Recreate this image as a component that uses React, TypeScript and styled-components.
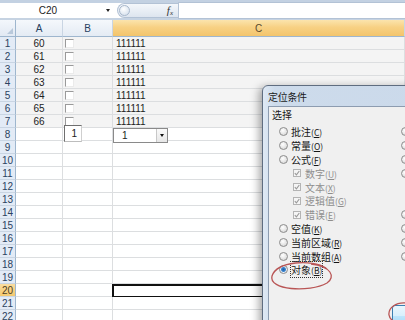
import React from 'react';
import styled, { createGlobalStyle, css } from 'styled-components';

const GlobalStyle = createGlobalStyle`
  html, body { margin: 0; padding: 0; background: #fff; overflow: hidden; }
  #root { width: 405px; height: 320px; }
`;

const Screen = styled.div`
  position: relative;
  width: 405px;
  height: 320px;
  overflow: hidden;
  font-family: "Liberation Sans", Arial, sans-serif;
  font-size: 10px;
  color: #222;
  background: #fff;
`;

/* ---------- formula bar ---------- */
const FormulaBar = styled.div`
  display: flex;
  align-items: center;
  height: 20px;
  box-sizing: border-box;
  border-top: 3px solid #c3d1e2;
  border-bottom: 2px solid #c6d3e2;
  background: #fff;
`;

const NameBox = styled.div`
  display: flex;
  align-items: center;
  width: 117px;
  height: 100%;
`;

const NameText = styled.div`
  width: 96px;
  text-align: center;
  color: #222;
`;

const Caret = styled.span`
  margin-left: 10px;
  width: 0;
  height: 0;
  border-left: 2.5px solid transparent;
  border-right: 2.5px solid transparent;
  border-top: 3px solid #222;
`;

const FxBubble = styled.div`
  display: flex;
  align-items: center;
  justify-content: space-between;
  box-sizing: border-box;
  width: 61px;
  height: 15px;
  padding-right: 5px;
  border: 1px solid #b3c2d5;
  border-right: none;
  border-radius: 8px 0 0 8px;
  background: linear-gradient(#f4f7fb, #dde5ef);
`;

const SplitKnob = styled.span`
  width: 11px;
  height: 11px;
  margin-left: 1px;
  border-radius: 50%;
  box-sizing: border-box;
  border: 1px solid #a7b7cb;
  background: radial-gradient(circle at 40% 35%, #ffffff, #dde6f0 70%);
`;

const Fx = styled.span`
  font-family: "Liberation Serif", "Times New Roman", serif;
  font-style: italic;
  font-size: 11px;
  color: #333;
  sub {
    font-size: 7px;
    vertical-align: -1px;
  }
`;

const FormulaInput = styled.div`
  flex: 1;
  height: 15px;
  background: #fff;
  border-left: 1px solid #b3c2d5;
  border-top: 1px solid #b3c2d5;
  border-bottom: 1px solid #b3c2d5;
`;

/* ---------- sheet ---------- */
const Sheet = styled.div`
  display: grid;
  grid-template-columns: 16px 47px 50px 1fr;
  grid-template-rows: 17px;
  grid-auto-rows: 13px;
`;

const headerBase = css`
  box-sizing: border-box;
  display: flex;
  align-items: center;
  justify-content: center;
  color: #27415f;
`;

const CornerCell = styled.div`
  ${headerBase};
  position: relative;
  background: linear-gradient(#f3f7fc, #e2e9f3);
  border-right: 1px solid #9eb6ce;
  border-bottom: 1px solid #9eb6ce;
  &::after {
    content: "";
    position: absolute;
    right: 2px;
    bottom: 2px;
    border-left: 6px solid transparent;
    border-bottom: 6px solid #b9c9db;
  }
`;

const ColHeader = styled.div<{ $selected?: boolean }>`
  ${headerBase};
  border-right: 1px solid #c9d5e3;
  border-bottom: 1px solid #9eb6ce;
  background: ${(p) =>
    p.$selected
      ? 'linear-gradient(#fbe4ad, #f7d184 45%, #f3c46c)'
      : 'linear-gradient(#f5f8fc, #e4ebf4)'};
  color: ${(p) => (p.$selected ? '#5a4a2c' : '#27415f')};
`;

const RowHeader = styled.div<{ $selected?: boolean }>`
  ${headerBase};
  font-size: 10px;
  background: ${(p) =>
    p.$selected ? 'linear-gradient(#fadc9e, #f4c96f)' : '#e3ebf6'};
  border-right: 1px solid #9eb6ce;
  border-bottom: 1px solid #c9d5e3;
  color: ${(p) => (p.$selected ? '#4d3e22' : '#2b4260')};
`;

const Cell = styled.div<{ $shaded?: boolean; $align?: string; $active?: boolean }>`
  position: relative;
  box-sizing: border-box;
  display: flex;
  align-items: center;
  justify-content: ${(p) => p.$align || 'flex-start'};
  padding: 0 3px;
  background: ${(p) => (p.$shaded ? '#f4f4f4' : '#fff')};
  border-right: 1px solid #dcdee0;
  border-bottom: 1px solid #dcdee0;
  color: #222;
  ${(p) =>
    p.$active &&
    css`
      &::after {
        content: "";
        position: absolute;
        left: -1px;
        top: 0;
        right: -1px;
        bottom: -2px;
        border: 2px solid #111;
      }
    `}
`;

const SheetCheck = styled.span`
  width: 7px;
  height: 7px;
  margin-left: -1px;
  border-top: 1px solid #9a9a9a;
  border-left: 1px solid #9a9a9a;
  border-right: 1px solid #ebebeb;
  border-bottom: 1px solid #ebebeb;
  background: #fff;
`;

const SpinBox = styled.div`
  position: absolute;
  left: 1px;
  top: -3px;
  width: 18px;
  height: 17px;
  box-sizing: border-box;
  display: flex;
  align-items: center;
  justify-content: flex-end;
  padding-right: 4px;
  background: #fff;
  border: 1px solid;
  border-color: #6f6f6f #cfcfcf #bdbdbd #6f6f6f;
  z-index: 1;
`;

const ComboBox = styled.div`
  position: absolute;
  left: 0;
  top: 0;
  width: 55px;
  height: 15px;
  box-sizing: border-box;
  display: flex;
  align-items: center;
  background: #fff;
  border: 1px solid #8a8a8a;
  z-index: 1;
`;

const ComboText = styled.span`
  flex: 1;
  padding-left: 8px;
`;

const ComboButton = styled.span`
  width: 11px;
  height: 100%;
  box-sizing: border-box;
  display: flex;
  align-items: center;
  justify-content: center;
  border-left: 1px solid #c8c8c8;
  background: linear-gradient(#fafafa, #e6e6e6);
  &::before {
    content: "";
    border-left: 2.5px solid transparent;
    border-right: 2.5px solid transparent;
    border-top: 3px solid #111;
  }
`;

/* ---------- dialog ---------- */
const Dialog = styled.div`
  position: absolute;
  left: 262px;
  top: 85px;
  width: 300px;
  height: 262px;
  box-sizing: border-box;
  display: flex;
  flex-direction: column;
  padding: 0 6px 6px 5px;
  background: linear-gradient(90deg, #dfe9f4, #cddbeb 12px, #c9d8ea);
  border: 1px solid #5f6d80;
  border-radius: 6px 6px 0 0;
  box-shadow: -3px 2px 8px rgba(0, 0, 0, 0.35);
  font-family: "Noto Sans CJK SC", "Noto Sans", sans-serif;
  font-size: 10px;
  z-index: 2;
`;

const TitleBar = styled.div`
  height: 20px;
  display: flex;
  align-items: center;
  color: #1c1c1c;
  letter-spacing: -0.3px;
`;

const Client = styled.div`
  flex: 1;
  display: flex;
  flex-direction: column;
  padding: 1px 0 0 3px;
  background: #f0f0f0;
  border: 1px solid #8d9cb0;
`;

const GroupLabel = styled.div`
  height: 14px;
  line-height: 14px;
  margin-bottom: 3px;
  color: #1a1a1a;
`;

const OptionGrid = styled.div`
  display: grid;
  grid-template-columns: 122px 1fr;
  grid-auto-rows: 13.8px;
  margin-left: 7px;
`;

const Option = styled.div<{ $col: number; $row: number; $indent?: number; $disabled?: boolean }>`
  grid-column: ${(p) => p.$col};
  grid-row: ${(p) => p.$row};
  display: flex;
  align-items: center;
  gap: 3px;
  padding-left: ${(p) => p.$indent || 0}px;
  white-space: nowrap;
  color: ${(p) => (p.$disabled ? '#8e8e8e' : '#151515')};
`;

const Mnemonic = styled.span`
  font-size: 8.5px;
  u {
    text-decoration: underline;
    text-underline-offset: 1px;
  }
`;

const Radio = styled.span<{ $checked?: boolean }>`
  flex: none;
  width: 9px;
  height: 9px;
  box-sizing: border-box;
  border-radius: 50%;
  border: 1px solid #8c8c8c;
  background: ${(p) =>
    p.$checked
      ? 'radial-gradient(circle at 50% 50%, #1b5fa8 0, #3a84cf 2px, #eef2f6 3px, #d8dde3 100%)'
      : 'radial-gradient(circle at 40% 35%, #ffffff, #d9d9d9 80%)'};
`;

const CheckBox = styled.span`
  flex: none;
  width: 8px;
  height: 8px;
  margin-right: 1px;
  box-sizing: border-box;
  display: flex;
  align-items: center;
  justify-content: center;
  border: 1px solid #b4b4b4;
  background: #f5f5f5;
`;

const LabelText = styled.span<{ $focused?: boolean }>`
  ${(p) =>
    p.$focused &&
    css`
      outline: 1px dotted #333;
      outline-offset: 0px;
    `}
`;

const ButtonRow = styled.div`
  display: flex;
  margin-top: 28px;
  padding-left: 120px;
`;

const DialogButton = styled.div`
  width: 73px;
  height: 21px;
  box-sizing: border-box;
  display: flex;
  align-items: center;
  justify-content: center;
  border: 1px solid #3c7fb1;
  border-radius: 3px;
  background: linear-gradient(#eaf6fd, #d9f0fc 50%, #bee6fd 51%, #a7d9f5);
  color: #111;
`;

const Annotations = styled.svg`
  position: absolute;
  left: 0;
  top: 0;
  width: 405px;
  height: 320px;
  pointer-events: none;
  z-index: 3;
`;

const CheckMark = () => (
  <svg width="6" height="6" viewBox="0 0 6 6">
    <path d="M0.8 3.2 L2.4 4.8 L5.3 1" fill="none" stroke="#9a9a9a" strokeWidth="1.1" />
  </svg>
);

const Label = ({ text, k, focused }: { text: string; k: string; focused?: boolean }) => (
  <LabelText $focused={focused}>
    {text}
    <Mnemonic>
      (<u>{k}</u>)
    </Mnemonic>
  </LabelText>
);

type Opt = {
  col: number;
  row: number;
  kind: 'radio' | 'check';
  text: string;
  k: string;
  checked?: boolean;
  disabled?: boolean;
  indent?: number;
};

const options: Opt[] = [
  { col: 1, row: 1, kind: 'radio', text: '批注', k: 'C' },
  { col: 1, row: 2, kind: 'radio', text: '常量', k: 'O' },
  { col: 1, row: 3, kind: 'radio', text: '公式', k: 'F' },
  { col: 1, row: 4, kind: 'check', text: '数字', k: 'U', disabled: true, indent: 14 },
  { col: 1, row: 5, kind: 'check', text: '文本', k: 'X', disabled: true, indent: 14 },
  { col: 1, row: 6, kind: 'check', text: '逻辑值', k: 'G', disabled: true, indent: 14 },
  { col: 1, row: 7, kind: 'check', text: '错误', k: 'E', disabled: true, indent: 14 },
  { col: 1, row: 8, kind: 'radio', text: '空值', k: 'K' },
  { col: 1, row: 9, kind: 'radio', text: '当前区域', k: 'R' },
  { col: 1, row: 10, kind: 'radio', text: '当前数组', k: 'A' },
  { col: 1, row: 11, kind: 'radio', text: '对象', k: 'B', checked: true },
  { col: 2, row: 1, kind: 'radio', text: '行内容差异单元格', k: 'W' },
  { col: 2, row: 2, kind: 'radio', text: '列内容差异单元格', k: 'M' },
  { col: 2, row: 3, kind: 'radio', text: '引用单元格', k: 'P' },
  { col: 2, row: 4, kind: 'radio', text: '从属单元格', k: 'D' },
  { col: 2, row: 5, kind: 'radio', text: '直属', k: 'I', indent: 14 },
  { col: 2, row: 6, kind: 'radio', text: '所有级别', k: 'L', indent: 14 },
  { col: 2, row: 7, kind: 'radio', text: '最后一个单元格', k: 'S' },
  { col: 2, row: 8, kind: 'radio', text: '可见单元格', k: 'Y' },
  { col: 2, row: 9, kind: 'radio', text: '条件格式', k: 'T' },
  { col: 2, row: 10, kind: 'radio', text: '数据有效性', k: 'V' },
];

const ROWS = 22;

export default function App() {
  const rows = Array.from({ length: ROWS }, (_, i) => i + 1);
  return (
    <Screen>
      <GlobalStyle />
      <FormulaBar>
        <NameBox>
          <NameText>C20</NameText>
          <Caret />
        </NameBox>
        <FxBubble>
          <SplitKnob />
          <Fx>
            f<sub>x</sub>
          </Fx>
        </FxBubble>
        <FormulaInput />
      </FormulaBar>

      <Sheet>
        <CornerCell />
        <ColHeader>A</ColHeader>
        <ColHeader>B</ColHeader>
        <ColHeader $selected>C</ColHeader>
        {rows.map((r) => {
          const data = r <= 7;
          return (
            <React.Fragment key={r}>
              <RowHeader $selected={r === 20}>{r}</RowHeader>
              <Cell $shaded={data} $align="center">
                {data ? 59 + r : null}
              </Cell>
              <Cell $shaded={data}>
                {data && <SheetCheck />}
                {r === 8 && <SpinBox>1</SpinBox>}
              </Cell>
              <Cell $shaded={data} $active={r === 20}>
                {data ? '111111' : null}
                {r === 8 && (
                  <ComboBox>
                    <ComboText>1</ComboText>
                    <ComboButton />
                  </ComboBox>
                )}
              </Cell>
            </React.Fragment>
          );
        })}
      </Sheet>

      <Dialog>
        <TitleBar>定位条件</TitleBar>
        <Client>
          <GroupLabel>选择</GroupLabel>
          <OptionGrid>
            {options.map((o) => (
              <Option
                key={o.text}
                $col={o.col}
                $row={o.row}
                $indent={o.indent}
                $disabled={o.disabled}
              >
                {o.kind === 'radio' ? (
                  <Radio $checked={o.checked} />
                ) : (
                  <CheckBox>
                    <CheckMark />
                  </CheckBox>
                )}
                <Label text={o.text} k={o.k} focused={o.checked} />
              </Option>
            ))}
          </OptionGrid>
          <ButtonRow>
            <DialogButton>确定</DialogButton>
          </ButtonRow>
        </Client>
      </Dialog>

      <Annotations viewBox="0 0 405 320">
        <path
          d="M326 268 C312 259 277 261 272 276 C268 290 309 293 327 283 C336 277 331 266 311 264"
          fill="none"
          stroke="#b95555"
          strokeWidth="1.3"
        />
        <path
          d="M406 303 C396 302 388 308 389 315 C390 321 397 323 406 322"
          fill="none"
          stroke="#b95555"
          strokeWidth="1.3"
        />
      </Annotations>
    </Screen>
  );
}
